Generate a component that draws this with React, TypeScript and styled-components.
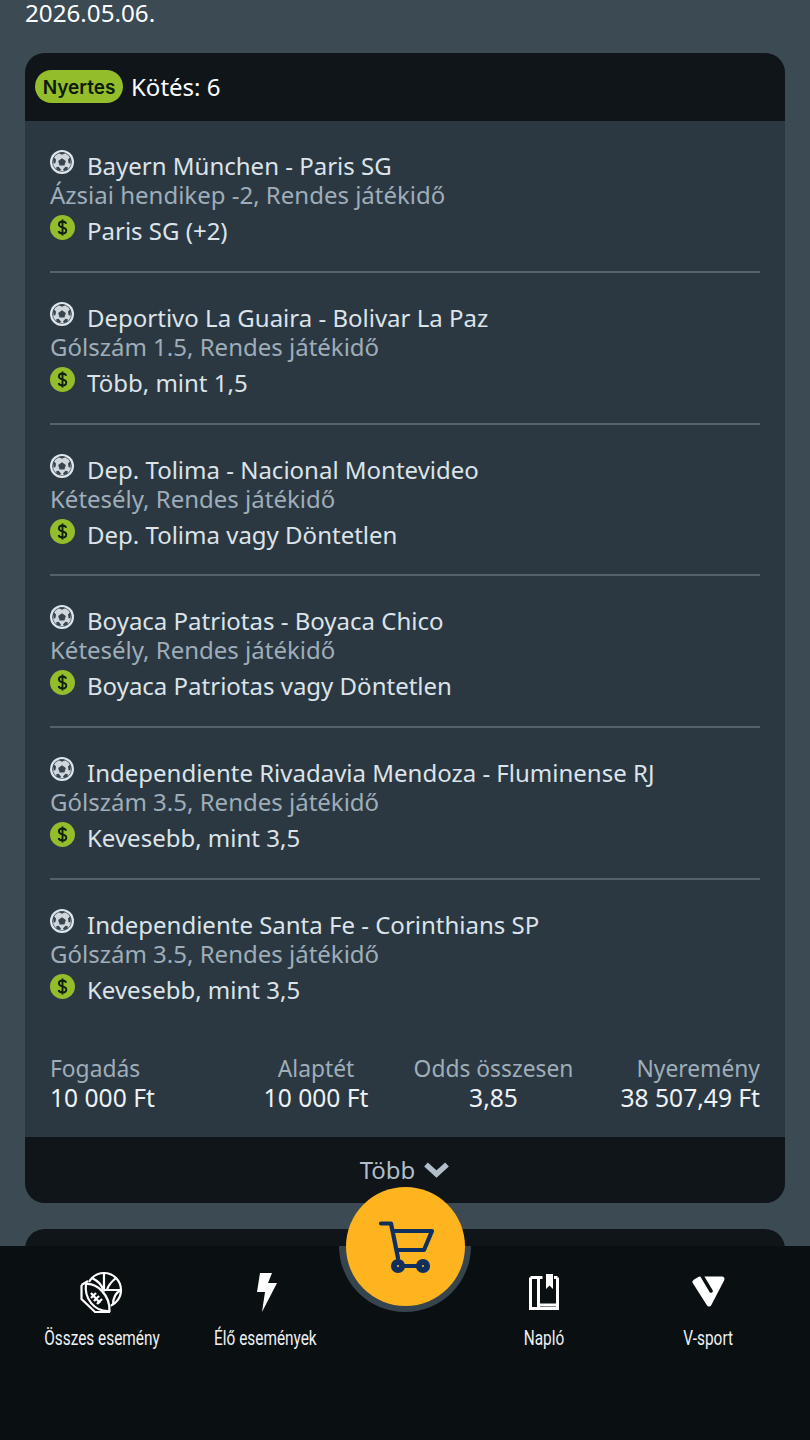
import React from 'react';
import styled, { createGlobalStyle } from 'styled-components';

const Global = createGlobalStyle`
  html, body { margin: 0; padding: 0; background: #3b4a53; }
  body { font-family: "Noto Sans", "Open Sans", sans-serif; }
`;
const Page = styled.div`
  position: relative; width: 810px; height: 1440px; overflow: hidden;
  background: #3b4a53;
  padding: 0 25px; box-sizing: border-box;
`;
const DateLine = styled.div`
  color: #fff; font-size: 24.200px; line-height: 26px; height: 53px;
`;
const Card = styled.section`
  border-radius: 20px; overflow: hidden; background: #2b3842;
`;
const CardHead = styled.header`
  height: 68px; background: #0f1519; display: flex; align-items: center; gap: 8px; padding: 0 10px 2px;
  box-sizing: border-box; color: #fff; font-size: 24px;
`;
const Badge = styled.span`
  background: #94bd2c; color: #0c1a08; font-size: 19px; font-weight: 600; font-family: Inter, sans-serif;
  border-radius: 17px; height: 33px; width: 88px; display: flex; align-items: center; justify-content: center;
  padding-top: 2px; box-sizing: border-box;
`;
const Body = styled.div`padding: 0 25px;`;
const Row = styled.article<{ $last?: boolean }>`
  height: 151.8px; box-sizing: border-box; padding-top: 28px;
  border-bottom: ${p => (p.$last ? 'none' : '2px solid #55626c')};
`;
const IconLine = styled.div`
  display: grid; grid-template-columns: 37px 1fr; color: #dce3e9; font-size: 24px; line-height: 34px; height: 34px;
  svg { margin-top: 1px; }
`;
const Market = styled.div`
  color: #9fadb9; font-size: 24px; line-height: 28px; height: 33px; margin-top: -2px;
`;
const Stats = styled.div`
  display: grid; grid-template-columns: 176px 180px 175px 1fr; padding: 22px 0 25px;
`;
const Stat = styled.div<{ $align: string }>`
  text-align: ${p => p.$align}; display: flex; flex-direction: column;
`;
const StatLabel = styled.span`color: #9fadb9; font-size: 22.800px; line-height: 29px; white-space: nowrap;`;
const StatValue = styled.span`color: #eef2f5; font-size: 24.6px; line-height: 29px; white-space: nowrap;`;
const More = styled.footer`
  height: 66px; background: #0f1519; color: #b1bdc8; font-size: 24px; display: flex; justify-content: center;
  align-items: center; gap: 8px;
`;
const NextCard = styled.section`
  height: 60px; margin-top: 26px; background: #0f1519; border-radius: 20px 20px 0 0;
`;
const Nav = styled.nav`
  position: absolute; left: 0; right: 0; bottom: 0; height: 194px; background: #0a0f12;
`;
const Items = styled.div`
  display: grid; grid-template-columns: 204px 122px 136px 164px 164px; padding: 20px 0 0;
`;
const Item = styled.div<{ $col: number }>`
  grid-column: ${p => p.$col};
  display: flex; flex-direction: column; align-items: center;
  color: #eef1f3; font-family: Roboto, sans-serif; font-size: 20.500px;
`;
const IconBox = styled.div`height: 52px; display: flex; align-items: center; justify-content: center;`;
const Label = styled.span`margin-top: 7px; line-height: 26px; white-space: nowrap; display: inline-block; transform: scaleX(0.75); transform-origin: center;`;
const Ring = styled.div`
  position: absolute; left: 339px; top: 0; width: 132px; height: 66px; background: #36444e;
  border-radius: 0 0 66px 66px;
`;
const Fab = styled.div`
  position: absolute; left: 346px; top: -59px; width: 119px; height: 119px; border-radius: 50%;
  background: #fdb41e; display: flex; align-items: center; justify-content: center;
`;
const CartIcon = styled.svg`margin: 3px 0 0 3px;`;

const Ball = () => (
  <svg width="24" height="24" viewBox="0 0 24 24">
    <circle cx="12" cy="12" r="12" fill="#dfe6ec" />
    <circle cx="12" cy="12" r="9.800" fill="#2c3842" />
    <circle cx="12" cy="12" r="9.200" fill="#cfd7dd" />
    <path d="M12 8.200l3.800 2.800-1.400 4.400H9.600L8.200 11z" fill="#39444e" />
    <path d="M8.500 3 12 4.800 15.500 3 14 2.300h-4zM3 9l.6 4.800 1.900-.8.500-3.500-1.800-1.900zM21 9l-.6 4.800-1.900-.8-.5-3.500 1.800-1.900zM6.500 19.500l3.500 1.800 1-1.800-2.500-2.700-2.300.4zM17.500 19.500 14 21.300l-1-1.800 2.500-2.700 2.300.4z" fill="#39444e" />
  </svg>
);
const Dollar = () => (
  <svg width="25" height="25" viewBox="0 0 25 25">
    <circle cx="12.500" cy="12.500" r="12.500" fill="#94bd2c" />
    <path d="M16.200 8.800c-.5-1.500-2-2.300-3.700-2.300-2 0-3.600 1-3.600 2.900 0 4 7.400 2 7.400 6 0 2-1.700 3-3.800 3-1.900 0-3.500-.9-3.900-2.500M12.500 4.500v16" fill="none" stroke="#10200c" strokeWidth="1.900" />
  </svg>
);
const Chevron = () => (
  <svg width="27" height="18" viewBox="0 0 27 18"><path d="M3 3.500l10.500 9.500L24 3.500" fill="none" stroke="#b1bdc8" strokeWidth="5.500" /></svg>
);
const Cart = () => (
  <CartIcon width="60" height="56" viewBox="0 0 60 56" fill="none" stroke="#0f2f5f" strokeWidth="4.200" strokeLinecap="round" strokeLinejoin="round">
    <path d="M4 3.500h10L21 38" />
    <path d="M17 11h38l-8 19H20" />
    <path d="M21 46h25" />
    <circle cx="21" cy="46" r="5" fill="#0f2f5f" /><circle cx="46" cy="46" r="5" fill="#0f2f5f" />
    <circle cx="21" cy="46" r="1.100" fill="#fdb41e" stroke="none" /><circle cx="46" cy="46" r="1.100" fill="#fdb41e" stroke="none" />
  </CartIcon>
);
const Sports = () => (
  <svg width="44" height="44" viewBox="0 0 44 44" fill="none" stroke="#fff" strokeWidth="2.200">
    <circle cx="24" cy="20" r="17" />
    <path d="M24 3v34M7 20h34M12 8c6 3 10 7 11 12M36 8c-5 4-8 8-9 12M33 35c0-7 2-12 8-15" />
    <path d="M1.500 15l6-4L30 25l1 17H15L1.500 29z" fill="#0a0f12" stroke="none" />
    <path d="M1.500 15 8 11M1.500 15v14L15 42h15" />
    <path d="M6 14c11-1 24 11 23.500 27C14 42 4 28 6 14z" fill="#0a0f12" />
    <path d="M11 23l9 10M11 28l5-5M14 31l5-5M17 34l5-5" strokeWidth="2.300" />
  </svg>
);
const Bolt = () => (
  <svg width="24" height="40" viewBox="0 0 24 40"><path d="M7 1h12l-4 10h9L9 40l3-20H4z" fill="#fff" /></svg>
);
const Book = () => (
  <svg width="30" height="36" viewBox="0 0 30 36" fill="none" stroke="#fff" strokeWidth="3">
    <path d="M1.500 3.500v31h27v-31" /><path d="M1.500 3.500h12M9.500 3.500v31M9.500 31h19" />
    <path d="M17 0h7v15l-3.500-3.500L17 15z" fill="#fff" stroke="none" />
    <path d="M25 3.500h3.500" />
  </svg>
);
const VLogo = () => (
  <svg width="35" height="33" viewBox="0 0 35 33">
    <path d="M4 6 9 3h22l-13 25z" fill="#fff" stroke="#fff" strokeWidth="5" strokeLinejoin="round" />
    <path d="M10.500-1 20 15" fill="none" stroke="#0a0f12" strokeWidth="3.500" strokeLinecap="round" />
  </svg>
);

const rows = [
  ['Bayern München - Paris SG', 'Ázsiai hendikep -2, Rendes játékidő', 'Paris SG (+2)'],
  ['Deportivo La Guaira - Bolivar La Paz', 'Gólszám 1.5, Rendes játékidő', 'Több, mint 1,5'],
  ['Dep. Tolima - Nacional Montevideo', 'Kétesély, Rendes játékidő', 'Dep. Tolima vagy Döntetlen'],
  ['Boyaca Patriotas - Boyaca Chico', 'Kétesély, Rendes játékidő', 'Boyaca Patriotas vagy Döntetlen'],
  ['Independiente Rivadavia Mendoza - Fluminense RJ', 'Gólszám 3.5, Rendes játékidő', 'Kevesebb, mint 3,5'],
  ['Independiente Santa Fe - Corinthians SP', 'Gólszám 3.5, Rendes játékidő', 'Kevesebb, mint 3,5'],
];
const stats = [
  ['Fogadás', '10 000 Ft', 'left'],
  ['Alaptét', '10 000 Ft', 'center'],
  ['Odds összesen', '3,85', 'center'],
  ['Nyeremény', '38 507,49 Ft', 'right'],
];

export default function App() {
  return (
    <Page>
      <Global />
      <DateLine>2026.05.06.</DateLine>
      <Card>
        <CardHead><Badge>Nyertes</Badge>Kötés: 6</CardHead>
        <Body>
          {rows.map((r, i) => (
            <Row key={i} $last={i === rows.length - 1}>
              <IconLine><Ball /><span>{r[0]}</span></IconLine>
              <Market>{r[1]}</Market>
              <IconLine><Dollar /><span>{r[2]}</span></IconLine>
            </Row>
          ))}
          <Stats>
            {stats.map(s => (
              <Stat key={s[0]} $align={s[2]}><StatLabel>{s[0]}</StatLabel><StatValue>{s[1]}</StatValue></Stat>
            ))}
          </Stats>
        </Body>
        <More>Több <Chevron /></More>
      </Card>
      <NextCard />
      <Nav>
        <Ring />
        <Fab><Cart /></Fab>
        <Items>
          <Item $col={1}><IconBox><Sports /></IconBox><Label>Összes esemény</Label></Item>
          <Item $col={2}><IconBox><Bolt /></IconBox><Label>Élő események</Label></Item>
          <Item $col={4}><IconBox><Book /></IconBox><Label>Napló</Label></Item>
          <Item $col={5}><IconBox><VLogo /></IconBox><Label>V-sport</Label></Item>
        </Items>
      </Nav>
    </Page>
  );
}
